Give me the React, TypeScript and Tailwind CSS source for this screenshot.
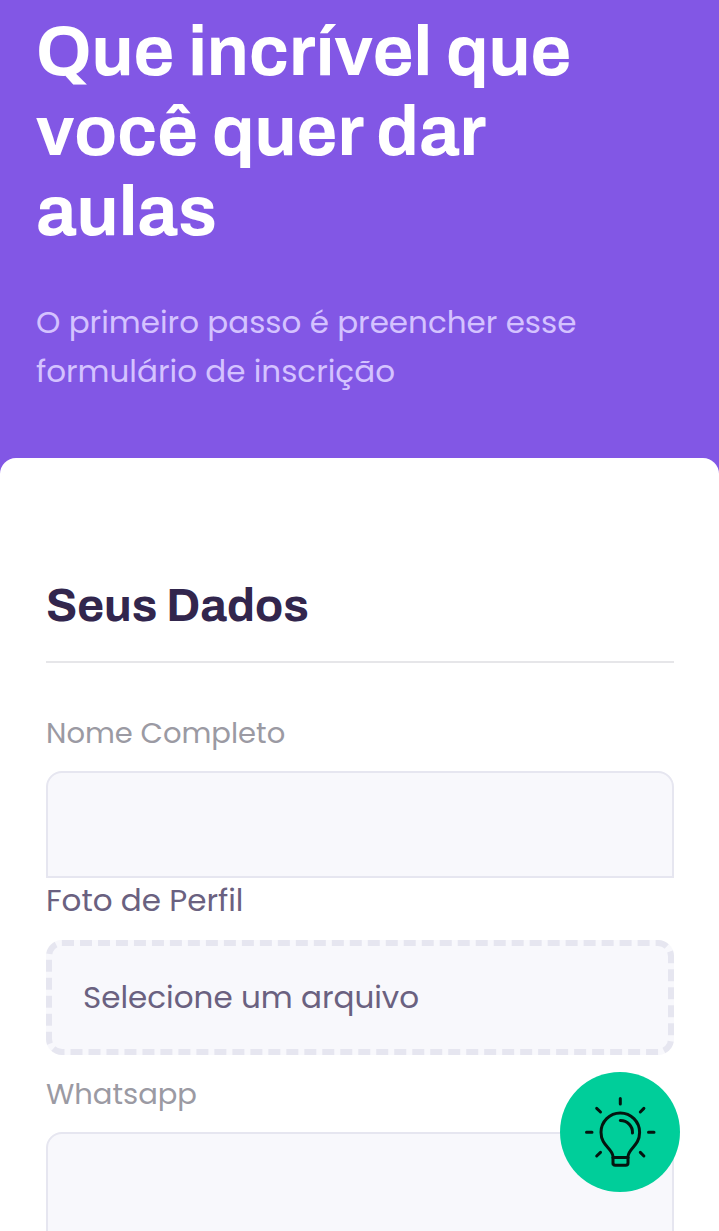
import { useId, useRef } from 'react';

function BulbIcon() {
  return (
    <svg
      viewBox="0 0 120 120"
      className="size-full"
      fill="none"
      stroke="#04140f"
      strokeWidth="3"
      strokeLinecap="round"
      strokeLinejoin="round"
      aria-hidden="true"
    >
      <path d="M53 92V84.500C52.500 76 41 74 41 60.300a19.300 19.300 0 0 1 38.600 0C79.600 74 68.500 76 68 84.500V91q0 2.300-2.300 2.300H55.300Q53 93.300 53 91" />
      <path d="M53 85.600H68" />
      <path d="M60.300 48.500A12 12 0 0 1 72.500 61" />
      <path d="M60.300 26.500V32M26.500 60.300H32M88.500 60.300H94M36.700 36.400L40.500 40M83.900 36.400L80.300 40M36.700 84L40.500 80.400M83.900 84L80.300 80.400" />
    </svg>
  );
}

function TextField({ label, name, shape }: { label: string; name: string; shape: string }) {
  const id = useId();
  return (
    <div className="flex flex-col gap-3">
      <label htmlFor={id} className="text-[29px] leading-[52px] text-[#9b9aa3]">
        {label}
      </label>
      <input
        id={id}
        name={name}
        type="text"
        className={`h-[107px] w-full border-2 border-[#e6e6f0] bg-[#f8f8fc] px-8 text-[29px] text-[#6a6180] outline-none focus:border-[#8257e5] ${shape}`}
      />
    </div>
  );
}

function FileField() {
  const fileRef = useRef<HTMLInputElement>(null);
  const id = useId();
  return (
    <div className="flex flex-col gap-[18px] pb-[13px] text-[31px] text-[#6a6180]">
      <label htmlFor={id} className="leading-[44px]">
        Foto de Perfil
      </label>
      <input ref={fileRef} type="file" className="hidden" aria-label="Arquivo da foto" />
      <button
        id={id}
        type="button"
        onClick={() => fileRef.current?.click()}
        className="h-[115px] w-full rounded-2xl border-6 border-dashed border-[#e6e6f0] bg-[#f8f8fc] px-[31px] text-left"
      >
        Selecione um arquivo
      </button>
    </div>
  );
}

export default function App() {
  return (
    <div className="min-h-screen bg-[#8257e5] font-['Poppins','Inter',sans-serif]">
      <header className="px-9 pt-3 pb-[62px]">
        <h1 className="pr-12 font-['Archivo','Liberation_Sans',sans-serif] text-[70px] leading-[80px] font-bold text-white">
          Que incrível que você quer dar aulas
        </h1>
        <p className="mt-[46px] pr-12 text-[31px] leading-[49px] text-[#d4c2ff]">
          O primeiro passo é preencher esse formulário de inscrição
        </p>
      </header>
      <main className="rounded-t-2xl bg-white pt-[118px] pr-[45px] pl-[46px]">
        <form>
          <fieldset>
            <legend className="w-full border-b-2 border-[#e6e6e9] pb-[25px] font-['Archivo','Liberation_Sans',sans-serif] text-[46px] leading-[60px] font-bold text-[#32264d]">
              Seus Dados
            </legend>
            <div className="pt-11">
              <TextField label="Nome Completo" name="name" shape="rounded-t-2xl" />
              <FileField />
              <TextField label="Whatsapp" name="whatsapp" shape="rounded-t-2xl" />
            </div>
          </fieldset>
        </form>
      </main>
      <button
        type="button"
        aria-label="Dicas"
        className="fixed right-[39px] bottom-[39px] size-[120px] rounded-full bg-[#00ce9a]"
      >
        <BulbIcon />
      </button>
    </div>
  );
}
